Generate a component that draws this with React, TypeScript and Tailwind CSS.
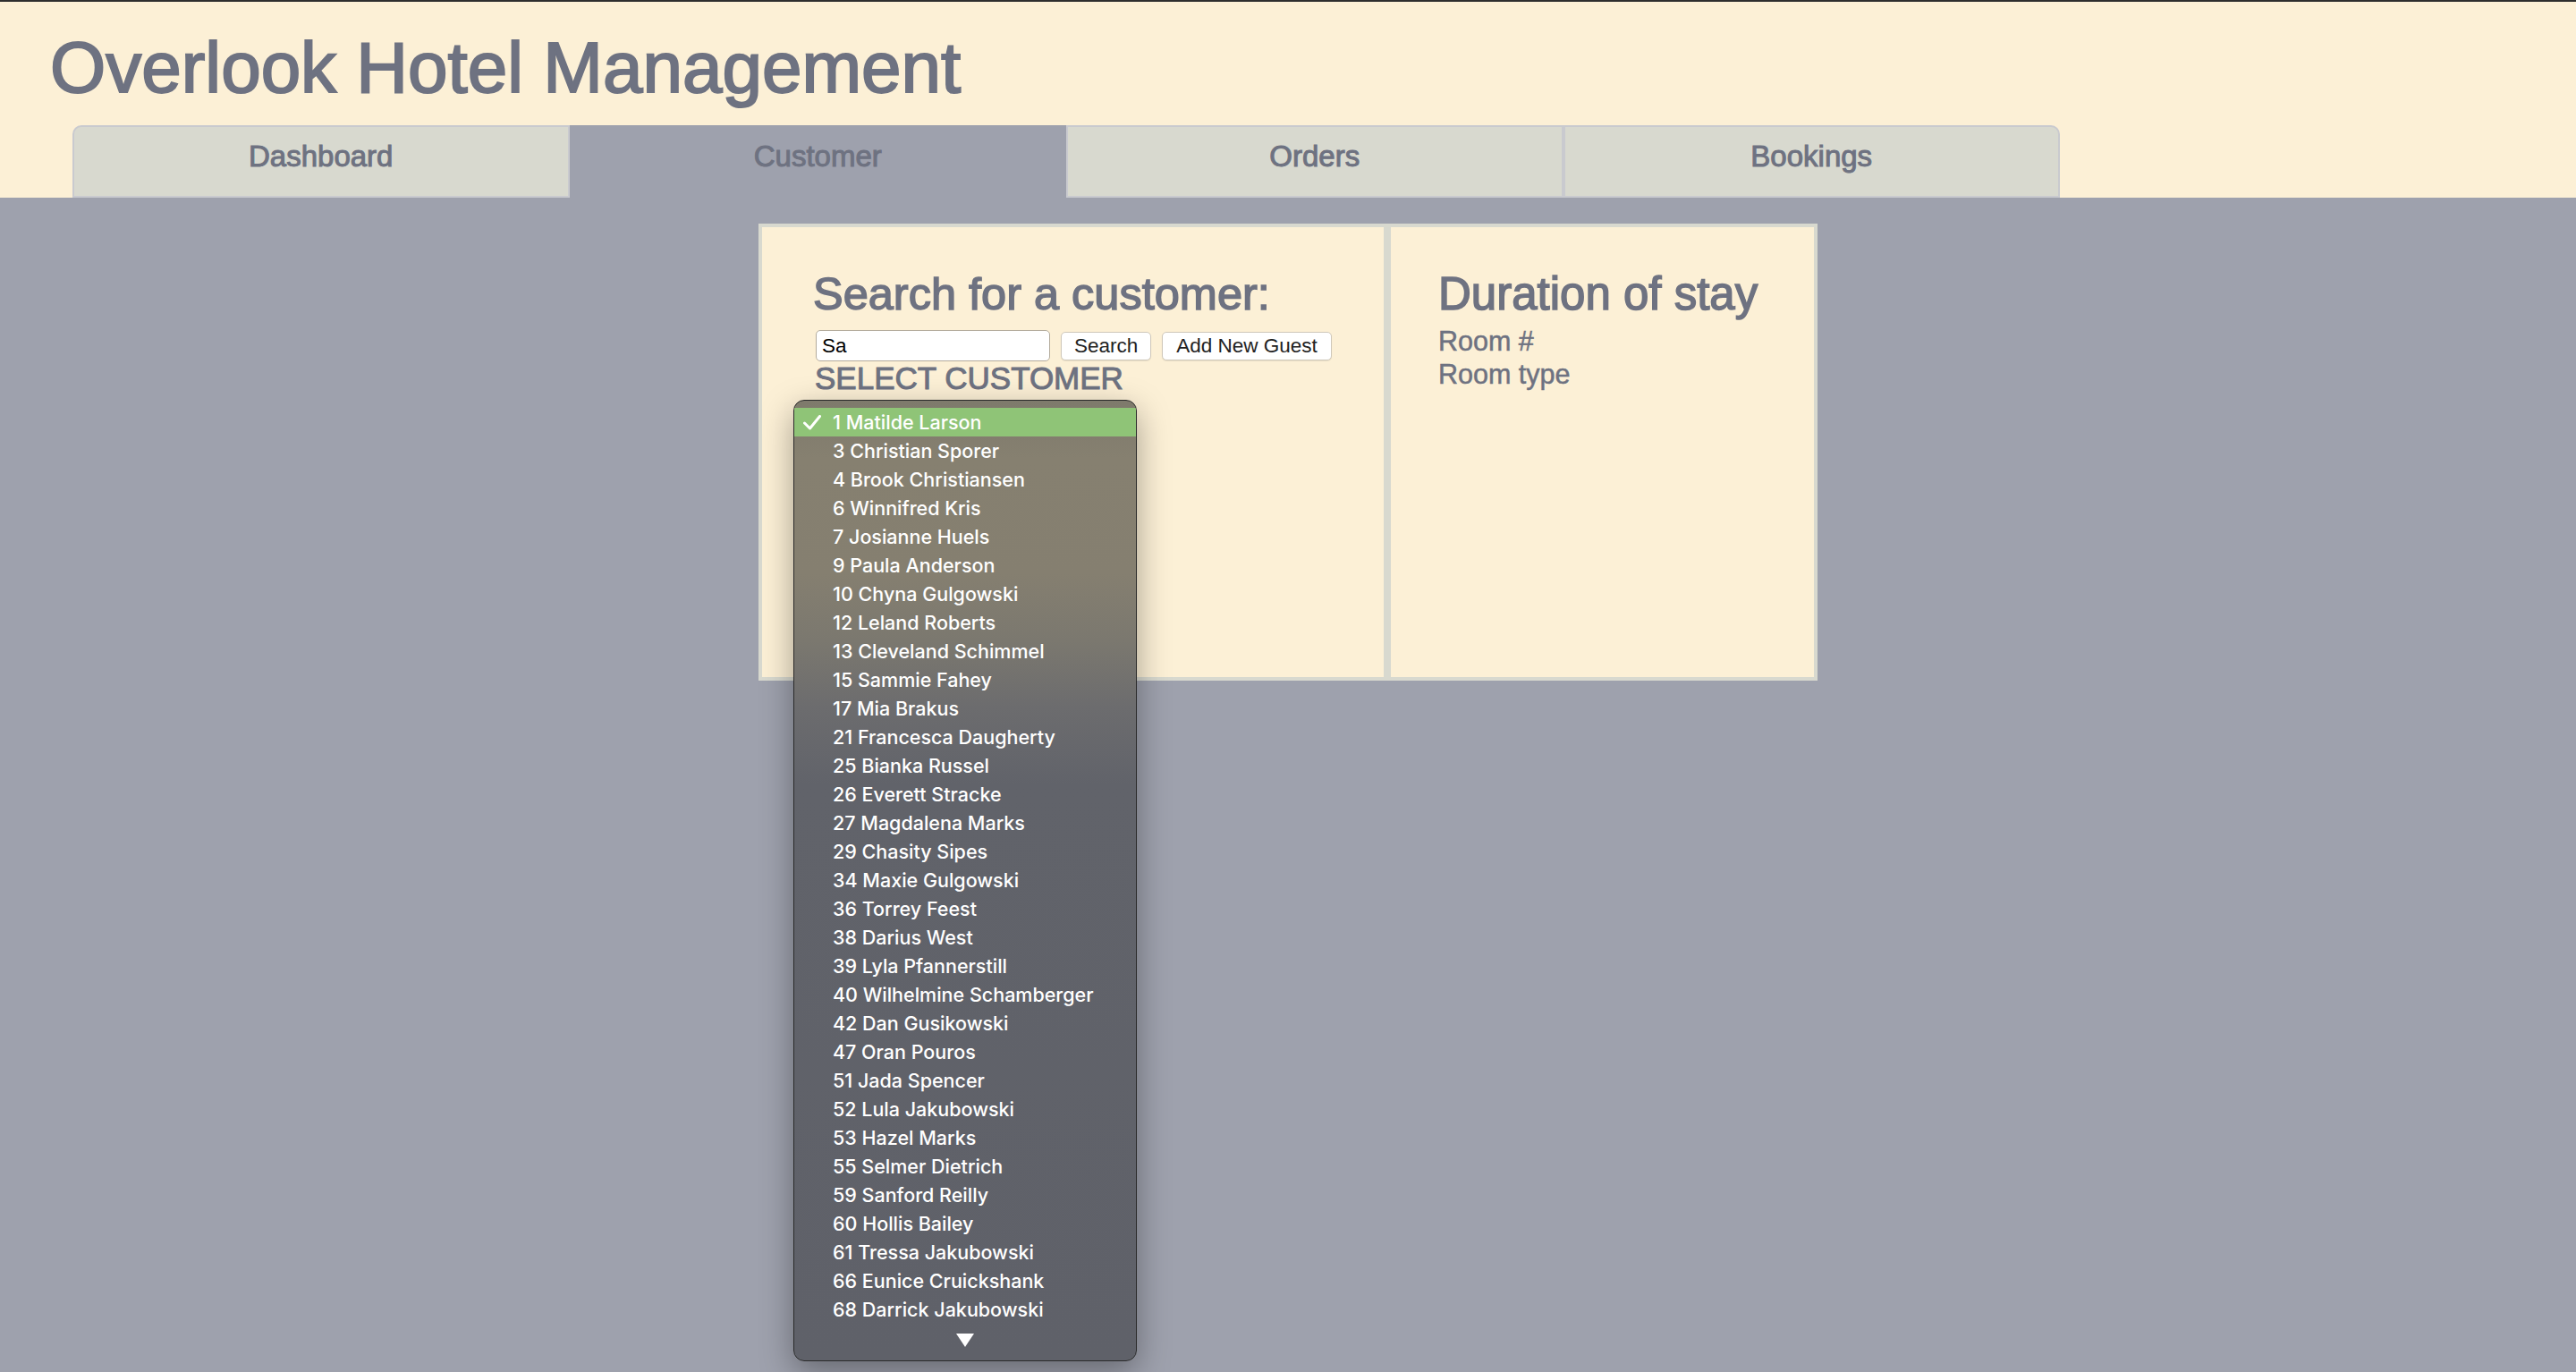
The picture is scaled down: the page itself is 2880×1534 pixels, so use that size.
import React from "react";

const customers = [
  "1 Matilde Larson",
  "3 Christian Sporer",
  "4 Brook Christiansen",
  "6 Winnifred Kris",
  "7 Josianne Huels",
  "9 Paula Anderson",
  "10 Chyna Gulgowski",
  "12 Leland Roberts",
  "13 Cleveland Schimmel",
  "15 Sammie Fahey",
  "17 Mia Brakus",
  "21 Francesca Daugherty",
  "25 Bianka Russel",
  "26 Everett Stracke",
  "27 Magdalena Marks",
  "29 Chasity Sipes",
  "34 Maxie Gulgowski",
  "36 Torrey Feest",
  "38 Darius West",
  "39 Lyla Pfannerstill",
  "40 Wilhelmine Schamberger",
  "42 Dan Gusikowski",
  "47 Oran Pouros",
  "51 Jada Spencer",
  "52 Lula Jakubowski",
  "53 Hazel Marks",
  "55 Selmer Dietrich",
  "59 Sanford Reilly",
  "60 Hollis Bailey",
  "61 Tressa Jakubowski",
  "66 Eunice Cruickshank",
  "68 Darrick Jakubowski",
];

const tabs = ["Dashboard", "Customer", "Orders", "Bookings"];

export default function App() {
  return (
    <div className="min-h-screen bg-[#9ea1ad] text-[#6e7281] font-['Liberation_Sans',Arial,sans-serif]">
      <header className="bg-[#fcf0d6]">
        <div className="h-[2px] bg-[#2e2e2e]" />
        <h1 className="ml-[56px] pt-[34px] text-[80px] leading-[80px] font-normal [-webkit-text-stroke:2px_#6e7281]">
          Overlook Hotel Management
        </h1>
        <nav className="ml-[81px] mt-[24px] grid w-[2222px] grid-cols-4">
          {tabs.map((t, i) => {
            const active = t === "Customer";
            return (
              <div
                key={t}
                className={
                  "h-[81px] border-2 pt-[16px] text-center text-[33px] leading-[33px] [-webkit-text-stroke:1px_#6e7281] " +
                  (active
                    ? "border-[#9ea1ad] bg-[#9ea1ad]"
                    : "border-[#c9cacf] bg-[#d8d9cf]") +
                  (i === 0 ? " rounded-tl-[10px]" : "") +
                  (i === 3 ? " rounded-tr-[10px]" : "")
                }
              >
                {t}
              </div>
            );
          })}
        </nav>
      </header>

      <main className="pt-[29px]">
        <div className="mx-auto flex w-[1184px]">
          <section className="relative h-[511px] w-[703px] border-4 border-[#d8d9cf] bg-[#fcf0d6] pl-[60px] pt-[50px]">
            <h2 className="-ml-[3px] text-[50.5px] leading-[50px] font-normal [-webkit-text-stroke:1.5px_#6e7281]">
              Search for a customer:
            </h2>
            <div className="mt-[15px] flex h-[35px] items-center gap-[12px]">
              <input
                readOnly
                value="Sa"
                className="h-[35px] w-[262px] rounded-[5px] border border-[#b3ab9c] bg-white px-[6px] text-[22.5px] text-black outline-none"
              />
              <button className="h-[32px] rounded-[5px] border border-[#cfc8ba] bg-white px-[14px] text-[22.5px] leading-[22px] text-[#222] shadow-[0_1px_1px_rgba(0,0,0,0.08)]">
                Search
              </button>
              <button className="h-[32px] rounded-[5px] border border-[#cfc8ba] bg-white px-[15px] text-[22.5px] leading-[22px] text-[#222] shadow-[0_1px_1px_rgba(0,0,0,0.08)]">
                Add New Guest
              </button>
            </div>
            <div className="mt-[1px] -ml-[1px] text-[35px] leading-[35px] [-webkit-text-stroke:1px_#6e7281]">
              SELECT CUSTOMER
            </div>

            <div className="absolute left-[35px] top-[193px] z-10 flex h-[1075px] w-[384px] flex-col overflow-hidden rounded-[12px] border border-[#2a2a2a] bg-[linear-gradient(to_bottom,#7e7a6c_0%,#868070_6%,#857f70_18%,#7b786f_25%,#6c6c6e_32%,#61636a_40%,#5f6169_100%)] pt-[8px] font-['Inter',sans-serif] text-[21.5px] font-medium text-white shadow-[0_12px_36px_rgba(0,0,0,0.35)]">
              {customers.map((c, i) => (
                <div
                  key={c}
                  className={
                    "relative flex h-[32px] shrink-0 items-center pl-[43px] " +
                    (i === 0 ? "bg-[#8fc477]" : "")
                  }
                >
                  {i === 0 && (
                    <svg
                      className="absolute left-[10px] top-[8px]"
                      width="20"
                      height="17"
                      viewBox="0 0 20 17"
                    >
                      <polyline
                        points="1.5,9 7.5,15 18.5,1.5"
                        fill="none"
                        stroke="white"
                        strokeWidth="3"
                        strokeLinecap="round"
                        strokeLinejoin="round"
                      />
                    </svg>
                  )}
                  {c}
                </div>
              ))}
              <div className="flex flex-1 items-center justify-center pb-[4px]">
                <svg width="20" height="15" viewBox="0 0 20 15">
                  <polygon points="0,0 20,0 10,15" fill="white" />
                </svg>
              </div>
            </div>
          </section>

          <section className="h-[511px] w-[481px] border-4 border-[#d8d9cf] bg-[#fcf0d6] pl-[53px] pt-[50px]">
            <h2 className="text-[51px] leading-[50px] font-normal [-webkit-text-stroke:1.5px_#6e7281]">
              Duration of stay
            </h2>
            <div className="mt-[9px] text-[30.5px] leading-[36.5px] [-webkit-text-stroke:0.5px_#6e7281]">
              <div>Room #</div>
              <div>Room type</div>
            </div>
          </section>
        </div>
      </main>
    </div>
  );
}
